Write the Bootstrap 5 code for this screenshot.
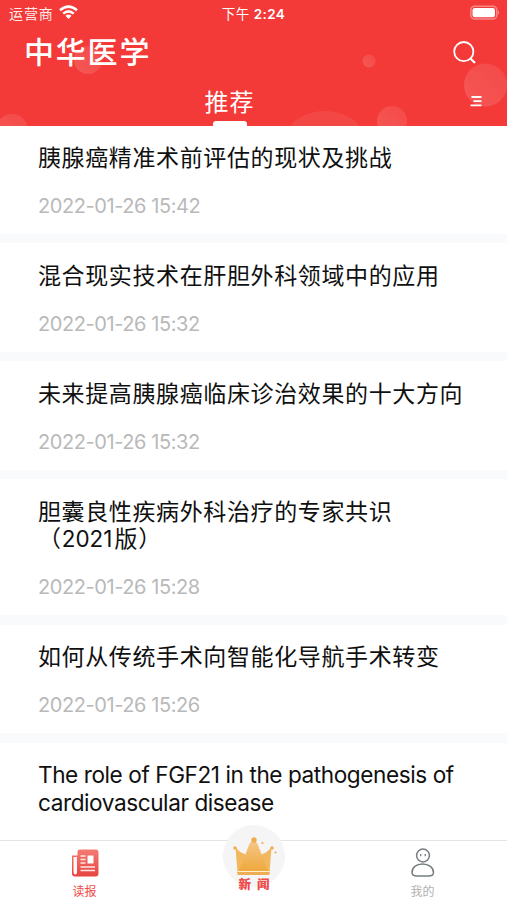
<!DOCTYPE html>
<html lang="zh-CN">
<head>
<meta charset="utf-8">
<meta name="viewport" content="width=device-width, initial-scale=1">
<title>中华医学</title>
<link href="https://cdn.jsdelivr.net/npm/bootstrap@5.3.0/dist/css/bootstrap.min.css" rel="stylesheet">
<style>
body{font-family:Inter,"Noto Sans CJK SC",sans-serif;height:900px;overflow:hidden;background:#fff;color:#101010}
.app-head{height:125.5px;background:#f33a38;color:#fff}
.bubbles{left:0;top:0;z-index:0}
.status{height:28px;font-size:14px;padding:0 7px 0 9px;line-height:27px}
.carrier{letter-spacing:.9px;margin-top:-1px;opacity:.9}
.wifi{margin:-3px 0 0 5px}
.status .clock{font-weight:600;font-size:13.5px;letter-spacing:.4px;top:.5px}
.clock .period{font-weight:400;letter-spacing:.6px}
.brand{font-size:30px;font-weight:500;letter-spacing:1.8px;line-height:48px;padding-left:24px;padding-right:31px}
.tabs-row{height:49.5px;padding-right:25px}
.tab-on{font-size:24px;letter-spacing:1px;line-height:30px;padding-top:11.5px;margin-left:204.5px}
.tab-on::after{content:"";display:block;width:34px;height:5px;border-radius:3px 3px 0 0;background:#fff;margin:3px auto 0}
.menu-icon{margin-top:18px}
.feed{height:714.5px;background:#f9fafb;row-gap:9.6px}
.entry{background:#fff;padding:19.5px 30px 14px 38px;flex:none}
.entry h2{font-size:23px;font-weight:400;line-height:27.8px;letter-spacing:.62px;margin:0 0 19px}
.entry .en{font-size:22.6px;letter-spacing:-.43px;padding-bottom:28px;margin-top:-1px}
.entry .num{font-size:22.4px;line-height:1;letter-spacing:.1px;margin-right:2px}
.entry time{display:block;font-size:20px;line-height:28px;height:28px;letter-spacing:-.42px;color:#b9b9b9}
.dock{height:60px;border-top:1px solid #e4e4e4;background:#fff;font-size:12px;line-height:16px}
.dock-item{width:169px;padding-top:6px}
.dock-item span{margin-top:3.5px}
.dock svg{display:block}
.red{color:#ee4a47}.dim{color:#b0b0b0}
.news{top:-16px;left:50%;margin-left:-31px;width:62px;height:62px;background:#f5f5f5;border-radius:50%;padding-top:3px}
.news-label{font-size:12.5px;font-weight:900;color:#ee4a47;letter-spacing:6px;margin-right:-7px;line-height:14px;white-space:nowrap}
</style>
<script src="https://cdn.jsdelivr.net/npm/bootstrap@5.3.0/dist/js/bootstrap.bundle.min.js"></script>
</head>
<body class="d-flex flex-column">
<header class="app-head position-relative overflow-hidden flex-shrink-0">
  <svg class="bubbles position-absolute" width="507" height="126" viewBox="0 0 507 126">
    <defs><linearGradient id="bub" x1="0" y1="1" x2="1" y2="0"><stop offset="0" stop-color="#fff" stop-opacity=".15"/><stop offset="1" stop-color="#fff" stop-opacity=".08"/></linearGradient></defs>
    <g fill="url(#bub)"><circle cx="88" cy="60" r="14"/><circle cx="369" cy="61" r="6.5"/><circle cx="485.500" cy="85" r="21.500"/><circle cx="392" cy="121" r="15"/><circle cx="12" cy="130" r="16"/></g><ellipse cx="325" cy="137" rx="38" ry="26" fill="#fff" fill-opacity=".07"/>
  </svg>
  <div class="status position-relative d-flex align-items-center justify-content-between">
    <div class="d-flex align-items-center"><span class="carrier">运营商</span>
      <svg class="wifi" width="19" height="15" viewBox="0 0 19 15" fill="none" stroke="#fff" stroke-width="2.500"><path d="M1 5.200Q9.500-2 18 5.200M4.200 8.600Q9.500 4.200 14.800 8.600"/><path d="M6.500 10.700Q9.500 8.200 12.500 10.700L9.500 14Z" fill="#fff" stroke="none"/></svg>
    </div>
    <div class="clock position-absolute start-50 translate-middle-x"><span class="period">下午</span> 2:24</div>
    <svg class="mb-1" width="30" height="15" viewBox="0 0 30 15"><rect x=".8" y="1.200" width="26" height="12.800" rx="4" fill="none" stroke="#fff" stroke-opacity=".4" stroke-width="1.600"/><rect x="2.500" y="2.900" width="22.500" height="9.400" rx="2.300" fill="#fff"/><path d="M28 5.600q2 2 0 4z" fill="#fff" fill-opacity=".5"/></svg>
  </div>
  <div class="brand position-relative d-flex align-items-center justify-content-between"><span>中华医学</span>
    <svg width="23" height="23" viewBox="0 0 23 23" fill="none" stroke="#fff" stroke-width="1.800"><circle cx="10.800" cy="10.600" r="9.600"/><path d="M17 17l5 5" stroke-width="2.200"/></svg>
  </div>
  <div class="tabs-row position-relative d-flex justify-content-between">
    <div class="tab-on">推荐</div>
    <svg class="menu-icon" width="12" height="15" viewBox="0 0 12 15" stroke="#fff" stroke-width="1.800"><path d="M1.500 3H11.500M3.500 7.200H11.500M.5 11.300H11.500"/></svg>
  </div>
</header>
<main class="feed d-flex flex-column overflow-hidden flex-shrink-0">
  <article class="entry"><h2>胰腺癌精准术前评估的现状及挑战</h2><time>2022-01-26 15:42</time></article>
  <article class="entry"><h2>混合现实技术在肝胆外科领域中的应用</h2><time>2022-01-26 15:32</time></article>
  <article class="entry"><h2>未来提高胰腺癌临床诊治效果的十大方向</h2><time>2022-01-26 15:32</time></article>
  <article class="entry"><h2>胆囊良性疾病外科治疗的专家共识<br>（<span class="num">2021</span>版）</h2><time>2022-01-26 15:28</time></article>
  <article class="entry"><h2>如何从传统手术向智能化导航手术转变</h2><time>2022-01-26 15:26</time></article>
  <article class="entry flex-grow-1"><h2 class="en">The role of FGF21 in the pathogenesis of cardiovascular disease</h2></article>
</main>
<nav class="dock position-relative d-flex justify-content-between flex-shrink-0">
  <div class="dock-item d-flex flex-column align-items-center red">
    <svg width="30" height="33" viewBox="0 0 30 33"><defs><linearGradient id="paper" x1="0" y1="0" x2="0" y2="1"><stop offset="0" stop-color="#f37b73"/><stop offset="1" stop-color="#e8443f"/></linearGradient></defs>
      <path d="M10 2.500H26Q28.500 2.500 28.500 5.500V26.500Q28.500 29.500 25.500 29.500H5Q2 29.500 2 26.500V8.500H7.500V4.500Q7.500 2.500 10 2.500Z" fill="url(#paper)"/><path d="M3.500 10H7V25Q7 27.500 5.300 27.500Q3.500 27.500 3.500 25Z" fill="#fff8f7"/><path d="M10.500 9H15.500M10.500 12.500H15.500M10.500 16H15.500M10.500 20H25M10.500 23.500H25" fill="none" stroke="#fff" stroke-opacity=".85" stroke-width="1.300"/><path d="M17.500 8.500H23.500V16.500H17.500Z" fill="#fff"/></svg>
    <span>读报</span>
  </div>
  <div class="news position-absolute d-flex flex-column align-items-center">
    <svg width="46" height="50" viewBox="0 0 46 50" class="flex-shrink-0"><defs><linearGradient id="gold" x1="0" y1="0" x2="0" y2="1"><stop offset="0" stop-color="#f7c687"/><stop offset="1" stop-color="#eda738"/></linearGradient></defs>
      <path d="M4.500 19Q9 25 14 26V45H6.500ZM40.500 19Q36 25 31 26V45H38.500Z" fill="#f3b75f"/><path d="M6.500 45Q12 33 18 17Q22.500 8 27 17Q33 33 38.500 45Z" fill="url(#gold)"/><g fill="#efad50"><circle cx="23" cy="12" r="2.700"/><circle cx="4" cy="20" r="1.700"/><circle cx="41" cy="20" r="1.700"/><circle cx="31.500" cy="15" r="1.100"/><circle cx="44.500" cy="24.500" r="1.100"/></g><path d="M6.500 43h32v4H6.500z" fill="#efad55"/><path d="M6.500 43.500h32" stroke="#fff0d2" stroke-width="1"/></svg>
    <div class="news-label">新闻</div>
  </div>
  <div class="dock-item d-flex flex-column align-items-center dim">
    <svg width="26" height="33" viewBox="0 0 26 33" fill="none" stroke="#777d80" stroke-width="1.500"><circle cx="13" cy="8.500" r="6.400"/><path d="M10.700 7v2.200M15.300 7v2.200" stroke-width="1.300"/><path d="M12.500 17C6 17 2 20.500 2 25.500Q2 29 7 29H18.500Q23.500 29 23.500 25.500C23.500 20.500 19 17 12.500 17Z"/></svg>
    <span>我的</span>
  </div>
</nav>
</body>
</html>
